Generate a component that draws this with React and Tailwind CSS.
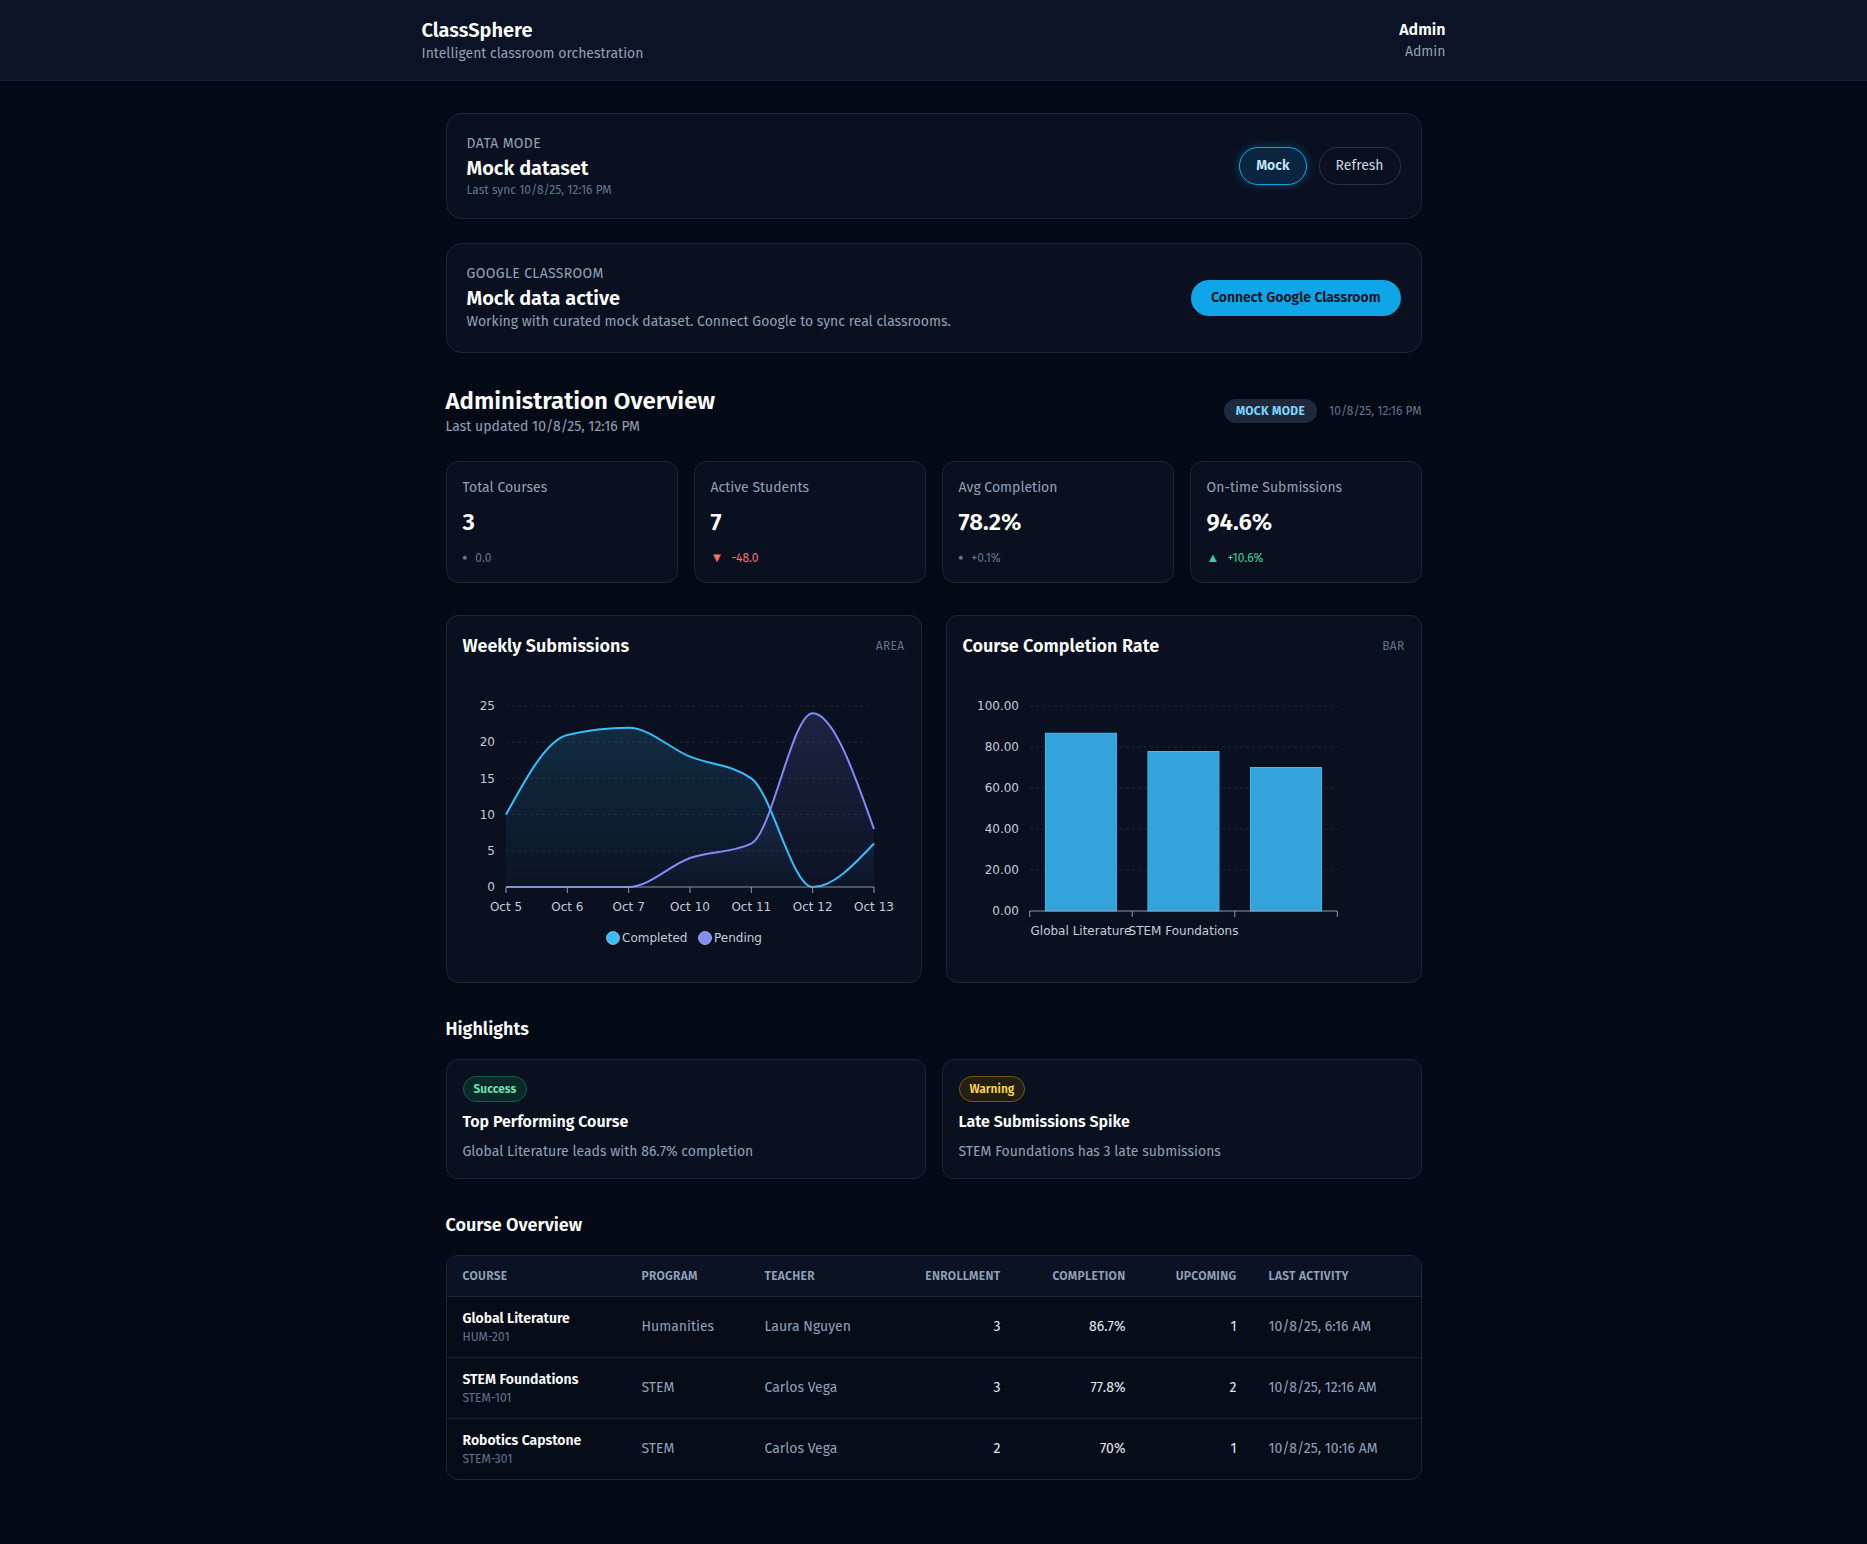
import React from "react";

const completed = [10, 21, 22, 18, 15, 0, 6];
const pending = [0, 0, 0, 4, 6, 24, 8];
const days = ["Oct 5", "Oct 6", "Oct 7", "Oct 10", "Oct 11", "Oct 12", "Oct 13"];

function sign(x) {
  return x < 0 ? -1 : 1;
}
function slope3(a, b, c) {
  const h0 = b.x - a.x;
  const h1 = c.x - b.x;
  const s0 = (b.y - a.y) / h0;
  const s1 = (c.y - b.y) / h1;
  const p = (s0 * h1 + s1 * h0) / (h0 + h1);
  return (sign(s0) + sign(s1)) * Math.min(Math.abs(s0), Math.abs(s1), 0.5 * Math.abs(p)) || 0;
}
function slope2(a, b, t) {
  const h = b.x - a.x;
  return h ? (3 * (b.y - a.y) / h - t) / 2 : t;
}
function monotone(pts) {
  const n = pts.length;
  const t = new Array(n);
  for (let i = 1; i < n - 1; i++) t[i] = slope3(pts[i - 1], pts[i], pts[i + 1]);
  t[0] = slope2(pts[0], pts[1], t[1]);
  t[n - 1] = slope2(pts[n - 2], pts[n - 1], t[n - 2]);
  let d = `M${pts[0].x},${pts[0].y}`;
  for (let i = 0; i < n - 1; i++) {
    const dx = (pts[i + 1].x - pts[i].x) / 3;
    d += `C${pts[i].x + dx},${pts[i].y + dx * t[i]},${pts[i + 1].x - dx},${pts[i + 1].y - dx * t[i + 1]},${pts[i + 1].x},${pts[i + 1].y}`;
  }
  return d;
}

const tickFont = { fontFamily: "'DejaVu Sans', sans-serif", fontSize: 12 };

function AreaChartSvg() {
  const x0 = 43, x1 = 411, yT = 30, yB = 211;
  const sy = (yB - yT) / 25;
  const step = (x1 - x0) / 6;
  const px = (i) => x0 + i * step;
  const py = (v) => yB - v * sy;
  const cPts = completed.map((v, i) => ({ x: px(i), y: py(v) }));
  const pPts = pending.map((v, i) => ({ x: px(i), y: py(v) }));
  const cLine = monotone(cPts);
  const pLine = monotone(pPts);
  const cArea = `${cLine}L${x1},${yB}L${x0},${yB}Z`;
  const pArea = `${pLine}L${x1},${yB}L${x0},${yB}Z`;
  return (
    <svg width="442" height="290" className="block">
      <defs>
        <linearGradient id="gc" x1="0" y1="0" x2="0" y2="1">
          <stop offset="0%" stopColor="#38bdf8" stopOpacity="0.16" />
          <stop offset="100%" stopColor="#38bdf8" stopOpacity="0.02" />
        </linearGradient>
        <linearGradient id="gp" x1="0" y1="0" x2="0" y2="1">
          <stop offset="0%" stopColor="#818cf8" stopOpacity="0.16" />
          <stop offset="100%" stopColor="#818cf8" stopOpacity="0.02" />
        </linearGradient>
      </defs>
      {[5, 10, 15, 20, 25].map((v) => (
        <line key={v} x1={x0} x2={x1 - 4} y1={py(v)} y2={py(v)} stroke="#1e2737" strokeDasharray="3 3" />
      ))}
      {[0, 5, 10, 15, 20, 25].map((v) => (
        <text key={v} x={32} y={py(v)} dy="0.355em" textAnchor="end" fill="#c4ccd8" style={tickFont}>
          {v}
        </text>
      ))}
      <path d={cArea} fill="url(#gc)" />
      <path d={pArea} fill="url(#gp)" />
      <path d={cLine} fill="none" stroke="#38bdf8" strokeWidth="2" />
      <path d={pLine} fill="none" stroke="#818cf8" strokeWidth="2" />
      <line x1={x0} x2={x1} y1={yB} y2={yB} stroke="#8e98a8" />
      {days.map((d, i) => (
        <g key={d}>
          <line x1={px(i)} x2={px(i)} y1={yB} y2={yB + 6} stroke="#8e98a8" />
          <text x={px(i)} y={231} dy="0.355em" textAnchor="middle" fill="#c4ccd8" style={tickFont}>
            {d}
          </text>
        </g>
      ))}
      <circle cx={150} cy={262} r={6.5} fill="#38bdf8" stroke="#cfe9f7" strokeOpacity="0.6" strokeWidth="1" />
      <text x={159} y={262} dy="0.355em" fill="#c4ccd8" style={tickFont}>Completed</text>
      <circle cx={242} cy={262} r={6.5} fill="#818cf8" stroke="#dcdffa" strokeOpacity="0.6" strokeWidth="1" />
      <text x={251} y={262} dy="0.355em" fill="#c4ccd8" style={tickFont}>Pending</text>
    </svg>
  );
}

function BarChartSvg() {
  const x0 = 66.7, x1 = 374.3, yT = 30, yB = 235;
  const band = (x1 - x0) / 3;
  const sy = (yB - yT) / 100;
  const py = (v) => yB - v * sy;
  const vals = [86.7, 77.8, 70];
  return (
    <svg width="442" height="290" className="block">
      {[20, 40, 60, 80, 100].map((v) => (
        <line key={v} x1={x0} x2={x1} y1={py(v)} y2={py(v)} stroke="#1e2737" strokeDasharray="3 3" />
      ))}
      {[0, 20, 40, 60, 80, 100].map((v) => (
        <text key={v} x={56} y={py(v)} dy="0.355em" textAnchor="end" fill="#c4ccd8" style={tickFont}>
          {v.toFixed(2)}
        </text>
      ))}
      {vals.map((v, i) => (
        <rect key={i} x={x0 + i * band + 15.7} y={py(v)} width={71} height={yB - py(v)} fill="#33a3da" stroke="#38bdf8" strokeWidth="1" />
      ))}
      <line x1={x0} x2={x1} y1={yB} y2={yB} stroke="#8e98a8" />
      {[0, 1, 2, 3].map((i) => (
        <line key={i} x1={x0 + i * band} x2={x0 + i * band} y1={yB} y2={yB + 6} stroke="#8e98a8" />
      ))}
      <text x={x0 + band / 2} y={254.7} dy="0.355em" textAnchor="middle" fill="#c4ccd8" style={tickFont}>
        Global Literature
      </text>
      <text x={x0 + band * 1.5} y={254.7} dy="0.355em" textAnchor="middle" fill="#c4ccd8" style={tickFont}>
        STEM Foundations
      </text>
    </svg>
  );
}

function Stat({ label, value, delta, tone }) {
  return (
    <div className="rounded-xl border border-[#1c2638] bg-[#0a1020] px-4 py-4">
      <div className="text-sm leading-5 text-slate-400">{label}</div>
      <div className="mt-2 text-2xl font-semibold leading-8 text-white">{value}</div>
      <div className="mt-3 flex items-center gap-2 text-xs leading-4">
        {tone === "neutral" && <span className="text-[8px] text-slate-500">●</span>}
        {tone === "down" && <span className="text-[13px] leading-4 text-[#f87171]">▼</span>}
        {tone === "up" && <span className="text-[13px] leading-4 text-[#34d399]">▲</span>}
        <span
          className={
            tone === "down" ? "text-[#f87171]" : tone === "up" ? "text-[#34d399]" : "text-slate-500"
          }
        >
          {delta}
        </span>
      </div>
    </div>
  );
}

const rows = [
  { name: "Global Literature", code: "HUM-201", program: "Humanities", teacher: "Laura Nguyen", enr: 3, comp: "86.7%", up: 1, last: "10/8/25, 6:16 AM" },
  { name: "STEM Foundations", code: "STEM-101", program: "STEM", teacher: "Carlos Vega", enr: 3, comp: "77.8%", up: 2, last: "10/8/25, 12:16 AM" },
  { name: "Robotics Capstone", code: "STEM-301", program: "STEM", teacher: "Carlos Vega", enr: 2, comp: "70%", up: 1, last: "10/8/25, 10:16 AM" },
];

export default function App() {
  return (
    <div className="min-h-screen bg-[#050a17] font-['Fira_Sans','Lato',sans-serif] text-slate-100">
      <header className="border-b border-[#1a2336] bg-[#0c1326]">
        <div className="mx-auto flex max-w-5xl items-center justify-between py-4">
          <div>
            <div className="text-xl font-semibold leading-7 text-white">ClassSphere</div>
            <div className="text-sm leading-5 text-slate-400">Intelligent classroom orchestration</div>
          </div>
          <div className="flex flex-col items-end">
            <div className="text-base font-semibold leading-6 text-white">Admin</div>
            <div className="text-sm leading-5 text-slate-400">Admin</div>
          </div>
        </div>
      </header>

      <main className="mx-auto max-w-5xl px-6 pb-16 pt-8">
        <div className="flex flex-col gap-6">
          <section className="flex items-center justify-between rounded-2xl border border-[#1c2638] bg-[#0a1020] p-5">
            <div>
              <div className="text-sm uppercase leading-5 tracking-wide text-slate-400">Data mode</div>
              <div className="text-xl font-semibold leading-7 text-white">Mock dataset</div>
              <div className="text-xs leading-4 text-slate-500">Last sync 10/8/25, 12:16 PM</div>
            </div>
            <div className="flex items-center gap-3">
              <button className="rounded-full border border-[#0ea5e9] bg-[#0b2541] px-4 py-2 text-sm font-semibold leading-5 text-[#c4e6fa] shadow-[0_0_10px_rgba(14,165,233,0.35)]">
                Mock
              </button>
              <button className="rounded-full border border-[#283246] px-4 py-2 text-sm leading-5 text-slate-300">
                Refresh
              </button>
            </div>
          </section>

          <section className="flex items-center justify-between rounded-2xl border border-[#1c2638] bg-[#0a1020] p-5">
            <div>
              <div className="text-sm uppercase leading-5 tracking-wide text-slate-400">Google Classroom</div>
              <div className="text-xl font-semibold leading-7 text-white">Mock data active</div>
              <div className="text-sm leading-5 text-slate-400">
                Working with curated mock dataset. Connect Google to sync real classrooms.
              </div>
            </div>
            <button className="rounded-full bg-[#0ea5e9] px-5 py-2 text-sm font-semibold leading-5 text-[#0b1220]">
              Connect Google Classroom
            </button>
          </section>
        </div>

        <div className="mt-8 flex items-center justify-between">
          <div>
            <h1 className="text-2xl font-semibold leading-8 text-white">Administration Overview</h1>
            <p className="text-sm leading-5 text-slate-400">Last updated 10/8/25, 12:16 PM</p>
          </div>
          <div className="flex items-center gap-3">
            <span className="rounded-full bg-[#1e293b] px-3 py-1 text-xs font-bold uppercase leading-4 tracking-wide text-[#7dd3fc]">
              Mock mode
            </span>
            <span className="text-xs leading-4 text-slate-500">10/8/25, 12:16 PM</span>
          </div>
        </div>

        <div className="mt-6 grid grid-cols-4 gap-4">
          <Stat label="Total Courses" value="3" delta="0.0" tone="neutral" />
          <Stat label="Active Students" value="7" delta="-48.0" tone="down" />
          <Stat label="Avg Completion" value="78.2%" delta="+0.1%" tone="neutral" />
          <Stat label="On-time Submissions" value="94.6%" delta="+10.6%" tone="up" />
        </div>

        <div className="mt-8 grid grid-cols-2 gap-6">
          <div className="rounded-xl border border-[#1c2638] bg-[#0a1020] p-4">
            <div className="flex items-center justify-between">
              <div className="text-lg font-semibold leading-7 text-white">Weekly Submissions</div>
              <div className="text-xs uppercase tracking-wide text-slate-500">Area</div>
            </div>
            <div className="mt-4">
              <AreaChartSvg />
            </div>
          </div>
          <div className="rounded-xl border border-[#1c2638] bg-[#0a1020] p-4">
            <div className="flex items-center justify-between">
              <div className="text-lg font-semibold leading-7 text-white">Course Completion Rate</div>
              <div className="text-xs uppercase tracking-wide text-slate-500">Bar</div>
            </div>
            <div className="mt-4">
              <BarChartSvg />
            </div>
          </div>
        </div>

        <h2 className="mt-8 text-lg font-semibold leading-7 text-white">Highlights</h2>
        <div className="mt-4 grid grid-cols-2 gap-4">
          <div className="rounded-xl border border-[#1c2638] bg-[#0a1020] p-4">
            <span className="inline-block rounded-full border border-[#115e4e] bg-[#0a2a28] px-2.5 py-1 text-xs font-semibold leading-4 text-[#6ee7b7]">
              Success
            </span>
            <div className="mt-2 text-base font-semibold leading-6 text-white">Top Performing Course</div>
            <div className="mt-2 text-sm leading-5 text-slate-400">Global Literature leads with 86.7% completion</div>
          </div>
          <div className="rounded-xl border border-[#1c2638] bg-[#0a1020] p-4">
            <span className="inline-block rounded-full border border-[#7a5512] bg-[#241f15] px-2.5 py-1 text-xs font-semibold leading-4 text-[#fcd34d]">
              Warning
            </span>
            <div className="mt-2 text-base font-semibold leading-6 text-white">Late Submissions Spike</div>
            <div className="mt-2 text-sm leading-5 text-slate-400">STEM Foundations has 3 late submissions</div>
          </div>
        </div>

        <h2 className="mt-8 text-lg font-semibold leading-7 text-white">Course Overview</h2>
        <div className="mt-4 overflow-hidden rounded-xl border border-[#1c2638] bg-[#070c19]">
          <table className="w-full table-fixed border-collapse text-sm">
            <colgroup>
              <col className="w-[179px]" />
              <col className="w-[123px]" />
              <col className="w-[151px]" />
              <col className="w-[117px]" />
              <col className="w-[125px]" />
              <col className="w-[111px]" />
              <col />
            </colgroup>
            <thead className="bg-[#0b1223]">
              <tr className="border-b border-[#1c2638] text-xs uppercase tracking-wide text-slate-400">
                <th className="px-4 py-3 text-left font-semibold leading-4">Course</th>
                <th className="px-4 py-3 text-left font-semibold leading-4">Program</th>
                <th className="px-4 py-3 text-left font-semibold leading-4">Teacher</th>
                <th className="px-4 py-3 text-right font-semibold leading-4">Enrollment</th>
                <th className="px-4 py-3 text-right font-semibold leading-4">Completion</th>
                <th className="px-4 py-3 text-right font-semibold leading-4">Upcoming</th>
                <th className="px-4 py-3 text-left font-semibold leading-4">Last Activity</th>
              </tr>
            </thead>
            <tbody>
              {rows.map((r, i) => (
                <tr key={r.code} className={i > 0 ? "border-t border-[#161f30]" : ""}>
                  <td className="px-4 py-3">
                    <div className="font-semibold leading-5 text-white">{r.name}</div>
                    <div className="text-xs leading-4 text-slate-500">{r.code}</div>
                  </td>
                  <td className="px-4 py-3 leading-5 text-slate-400">{r.program}</td>
                  <td className="px-4 py-3 leading-5 text-slate-400">{r.teacher}</td>
                  <td className="px-4 py-3 text-right leading-5 text-slate-200">{r.enr}</td>
                  <td className="px-4 py-3 text-right leading-5 text-slate-200">{r.comp}</td>
                  <td className="px-4 py-3 text-right leading-5 text-slate-200">{r.up}</td>
                  <td className="px-4 py-3 leading-5 text-slate-400">{r.last}</td>
                </tr>
              ))}
            </tbody>
          </table>
        </div>
      </main>
    </div>
  );
}
